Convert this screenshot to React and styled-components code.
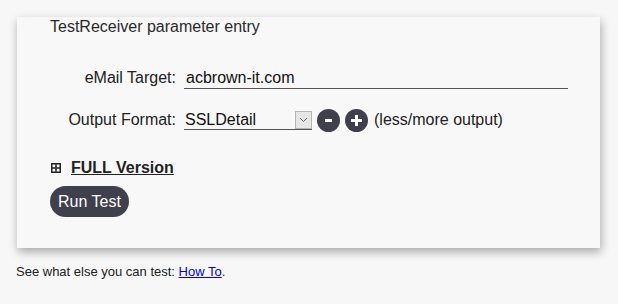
import React from 'react'
import styled, { createGlobalStyle } from 'styled-components'

const GlobalStyle = createGlobalStyle`
  html, body {
    margin: 0;
    padding: 0;
    background: #f7f7f7;
    font-family: "Liberation Sans", Arial, sans-serif;
    color: #222;
  }
`

const Page = styled.div`
  padding: 17px 18px 0 17px;
`

const Card = styled.div`
  width: 583px;
  height: 231px;
  box-sizing: border-box;
  background: #f8f8f8;
  box-shadow: 1px 4px 9px rgba(0, 0, 0, 0.32);
  padding: 0 0 0 33px;
`

const Title = styled.div`
  font-size: 16px;
  line-height: 18px;
  padding-top: 1px;
  color: #2a2a2a;
`

const Form = styled.div`
  display: grid;
  grid-template-columns: 126px 1fr;
  column-gap: 8px;
  row-gap: 12px;
  margin-top: 27px;
`

const Label = styled.label`
  font-size: 16px;
  text-align: right;
  height: 30px;
  line-height: 30px;
  color: #222;
`

const Field = styled.div`
  display: flex;
  align-items: center;
  height: 30px;
`

const TextInput = styled.input`
  width: 384px;
  height: 22px;
  box-sizing: border-box;
  border: none;
  border-bottom: 1px solid #555;
  background: transparent;
  font-family: inherit;
  font-size: 16px;
  color: #111;
  padding: 0 2px;
  outline: none;
`

const SelectWrap = styled.div`
  position: relative;
  width: 128px;
  height: 19px;
`

const Select = styled.select`
  appearance: none;
  width: 100%;
  height: 19px;
  box-sizing: border-box;
  border: none;
  border-bottom: 1px solid #555;
  background: transparent;
  font-family: inherit;
  font-size: 16px;
  line-height: 18px;
  color: #111;
  padding: 0 0 0 1px;
  margin: 0;
  outline: none;
`

const ArrowBox = styled.span`
  position: absolute;
  right: 0;
  top: 0;
  width: 17px;
  height: 18px;
  box-sizing: border-box;
  border: 1px solid #b5b5b5;
  background: #e6e6e6;
  display: flex;
  align-items: center;
  justify-content: center;
  pointer-events: none;
`

const RoundButton = styled.button`
  width: 23px;
  height: 23px;
  border-radius: 50%;
  border: none;
  background: #40404c;
  color: #fff;
  padding: 0;
  margin-left: ${p => p.gap}px;
  display: flex;
  align-items: center;
  justify-content: center;
`

const Hint = styled.span`
  font-size: 16px;
  margin-left: 6px;
  color: #222;
`

const FullRow = styled.div`
  display: flex;
  align-items: center;
  margin-top: 24px;
  padding-left: 1px;
`

const FullLink = styled.a`
  font-size: 16px;
  font-weight: bold;
  color: #222;
  text-decoration: underline;
  margin-left: 10px;
  line-height: 18px;
`

const RunButton = styled.button`
  margin-top: 9px;
  height: 31px;
  padding: 0 8px;
  border: none;
  border-radius: 16px;
  background: #40404c;
  color: #fff;
  font-family: inherit;
  font-size: 16px;
`

const Footer = styled.p`
  margin: 16px 0 0 -1px;
  font-size: 13px;
  line-height: 15px;
  color: #222;

  & a {
    color: #0000ee;
  }
`

const ExpandIcon = () => (
  <svg width="10" height="10" viewBox="0 0 10 10">
    <rect x="0.75" y="0.75" width="8.5" height="8.5" fill="none" stroke="#222" strokeWidth="1.5" />
    <line x1="5" y1="1" x2="5" y2="9" stroke="#222" strokeWidth="1.5" />
    <line x1="1" y1="5" x2="9" y2="5" stroke="#222" strokeWidth="1.5" />
  </svg>
)

const Chevron = () => (
  <svg width="9" height="6" viewBox="0 0 9 6">
    <polyline points="1,1 4.5,4.5 8,1" fill="none" stroke="#666" strokeWidth="1" />
  </svg>
)

const Minus = () => (
  <svg width="11" height="11" viewBox="0 0 11 11">
    <rect x="2" y="4" width="7" height="3" fill="#fff" />
  </svg>
)

const Plus = () => (
  <svg width="13" height="13" viewBox="0 0 13 13">
    <rect x="1" y="5" width="11" height="3" fill="#fff" />
    <rect x="5" y="1" width="3" height="11" fill="#fff" />
  </svg>
)

export default function App() {
  return (
    <Page>
      <GlobalStyle />
      <Card>
        <Title>TestReceiver parameter entry</Title>
        <Form>
          <Label>eMail Target:</Label>
          <Field>
            <TextInput defaultValue="acbrown-it.com" />
          </Field>
          <Label>Output Format:</Label>
          <Field>
            <SelectWrap>
              <Select defaultValue="SSLDetail">
                <option>SSLDetail</option>
                <option>Summary</option>
                <option>Detail</option>
              </Select>
              <ArrowBox><Chevron /></ArrowBox>
            </SelectWrap>
            <RoundButton gap={5}><Minus /></RoundButton>
            <RoundButton gap={5}><Plus /></RoundButton>
            <Hint>(less/more output)</Hint>
          </Field>
        </Form>
        <FullRow>
          <ExpandIcon />
          <FullLink href="#">FULL Version</FullLink>
        </FullRow>
        <RunButton>Run Test</RunButton>
      </Card>
      <Footer>
        See what else you can test: <a href="#">How To</a>.
      </Footer>
    </Page>
  )
}
